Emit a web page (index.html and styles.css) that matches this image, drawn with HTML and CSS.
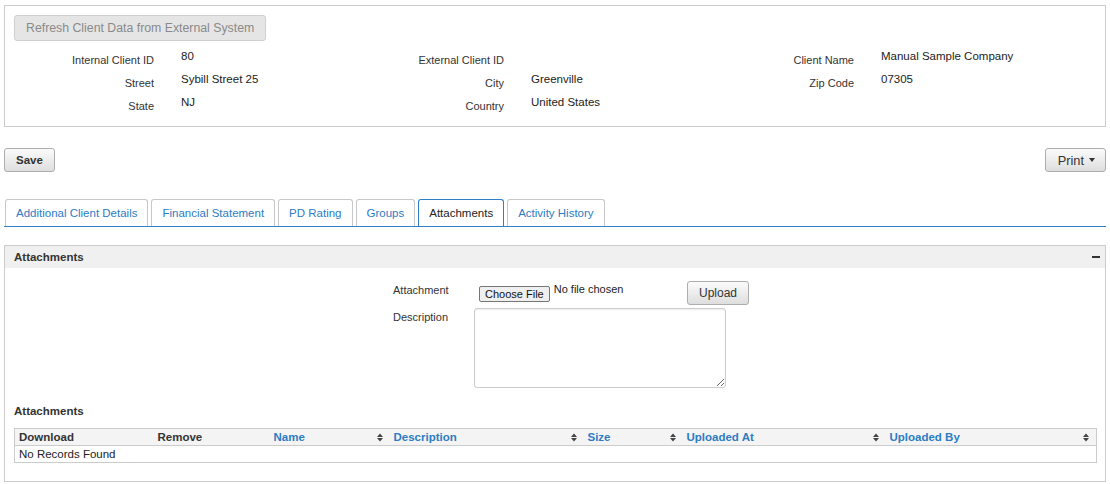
FILE: index.html
```html
<!DOCTYPE html>
<html lang="en">
<head>
<meta charset="utf-8">
<title>Client - Attachments</title>
<link rel="stylesheet" href="styles.css">
</head>
<body>
<div class="page">
  <section class="panel client">
    <button class="btn btn-refresh" disabled>Refresh Client Data from External System</button>
    <div class="fields">
      <div class="lbl">Internal Client ID</div><div class="val">80</div>
      <div class="lbl">External Client ID</div><div class="val"></div>
      <div class="lbl">Client Name</div><div class="val">Manual Sample Company</div>
      <div class="lbl">Street</div><div class="val">Sybill Street 25</div>
      <div class="lbl">City</div><div class="val">Greenville</div>
      <div class="lbl">Zip Code</div><div class="val">07305</div>
      <div class="lbl">State</div><div class="val">NJ</div>
      <div class="lbl">Country</div><div class="val">United States</div>
      <div class="lbl"></div><div class="val"></div>
    </div>
  </section>

  <div class="actions">
    <button class="btn btn-save">Save</button>
    <button class="btn btn-print">Print <span class="caret"></span></button>
  </div>

  <ul class="tabs">
    <li class="tab">Additional Client Details</li>
    <li class="tab">Financial Statement</li>
    <li class="tab">PD Rating</li>
    <li class="tab">Groups</li>
    <li class="tab active">Attachments</li>
    <li class="tab">Activity History</li>
  </ul>

  <section class="panel attach">
    <div class="panel-head"><span>Attachments</span><span class="collapse"></span></div>
    <div class="panel-body">
      <div class="upload">
        <div class="f-lbl">Attachment</div>
        <div class="file"><button class="choose">Choose File</button><span class="nofile">No file chosen</span></div>
        <div><button class="btn btn-upload">Upload</button></div>
        <div class="f-lbl">Description</div>
        <textarea class="desc"></textarea>
      </div>

      <h3 class="sub">Attachments</h3>
      <table class="grid">
        <colgroup>
          <col class="c1"><col class="c2"><col class="c3"><col class="c4"><col class="c5"><col class="c6"><col class="c7">
        </colgroup>
        <thead>
          <tr>
            <th>Download</th>
            <th>Remove</th>
            <th class="sortable"><div class="th-in"><span>Name</span><svg class="sort" viewBox="0 0 6 9" width="6" height="9"><polygon points="0,4 3,0.5 6,4"/><polygon points="0,5 3,8.5 6,5"/></svg></div></th>
            <th class="sortable"><div class="th-in"><span>Description</span><svg class="sort" viewBox="0 0 6 9" width="6" height="9"><polygon points="0,4 3,0.5 6,4"/><polygon points="0,5 3,8.5 6,5"/></svg></div></th>
            <th class="sortable"><div class="th-in"><span>Size</span><svg class="sort" viewBox="0 0 6 9" width="6" height="9"><polygon points="0,4 3,0.5 6,4"/><polygon points="0,5 3,8.5 6,5"/></svg></div></th>
            <th class="sortable"><div class="th-in"><span>Uploaded At</span><svg class="sort" viewBox="0 0 6 9" width="6" height="9"><polygon points="0,4 3,0.5 6,4"/><polygon points="0,5 3,8.5 6,5"/></svg></div></th>
            <th class="sortable"><div class="th-in"><span>Uploaded By</span><svg class="sort" viewBox="0 0 6 9" width="6" height="9"><polygon points="0,4 3,0.5 6,4"/><polygon points="0,5 3,8.5 6,5"/></svg></div></th>
          </tr>
        </thead>
        <tbody>
          <tr><td colspan="7">No Records Found</td></tr>
        </tbody>
      </table>
    </div>
  </section>
</div>
</body>
</html>
```

FILE: styles.css
```css
* { box-sizing: border-box; }

body {
  margin: 0;
  font-family: "Liberation Sans", Arial, sans-serif;
  color: #333;
  background: #fff;
}

.page {
  padding: 5px 4px 0 4px;
}

.panel {
  border: 1px solid #cccccc;
  background: #fff;
}

.client {
  padding: 9px 9px 10px;
}

.btn {
  font-family: inherit;
  color: #333;
  border: 1px solid #adadad;
  border-radius: 3px;
  background: linear-gradient(#fbfbfb, #dedede);
  cursor: pointer;
  margin: 0;
}

.btn-refresh {
  display: block;
  height: 26px;
  padding: 0 11px;
  font-size: 12.3px;
  color: #8a8a8a;
  background: #e5e5e5;
  border-color: #cfcfcf;
  cursor: default;
}

.fields {
  display: grid;
  grid-template-columns: 140px 210px 140px 210px 140px 210px;
  grid-auto-rows: 23px;
  margin-top: 6px;
}

.lbl {
  text-align: right;
  font-size: 11px;
  line-height: 14px;
  padding-top: 6px;
  color: #333;
}

.val {
  padding-left: 27px;
  padding-top: 2px;
  font-size: 11.5px;
  line-height: 14px;
  color: #222;
}

.actions {
  display: flex;
  justify-content: space-between;
  margin-top: 21px;
}

.btn-save {
  height: 24px;
  padding: 0 11px;
  font-size: 11.5px;
  font-weight: bold;
}

.btn-print {
  height: 24px;
  padding: 0 10px 0 12px;
  font-size: 12.8px;
  display: flex;
  align-items: center;
  gap: 5px;
}

.caret {
  width: 0;
  height: 0;
  border-left: 3.5px solid transparent;
  border-right: 3.5px solid transparent;
  border-top: 4px solid #333;
}

.tabs {
  list-style: none;
  margin: 27px 0 0;
  padding: 0 0 0 1px;
  display: flex;
  gap: 3px;
  border-bottom: 1px solid #2f80c9;
}

.tab {
  height: 27px;
  border: 1px solid #c8c8c8;
  border-bottom: 0;
  border-radius: 3px 3px 0 0;
  padding: 0 10px;
  font-size: 11.5px;
  line-height: 26px;
  color: #2d7cc4;
  background: #fff;
}

.tab.active {
  border-color: #2f80c9;
  color: #222;
}

.attach {
  margin-top: 18px;
}

.panel-head {
  height: 22px;
  background: #f0f0f0;
  display: flex;
  align-items: center;
  justify-content: space-between;
  padding: 0 5px 0 9px;
  font-size: 11.5px;
  font-weight: bold;
  color: #333;
}

.collapse {
  width: 8px;
  height: 2px;
  background: #333;
}

.panel-body {
  padding: 13px 9px 18px;
}

.upload {
  display: grid;
  grid-template-columns: 81px 213px auto;
  row-gap: 3px;
  align-items: start;
  width: max-content;
  margin-left: 379px;
}

.f-lbl {
  font-size: 11px;
  line-height: 14px;
  padding-top: 2px;
  color: #333;
}

.file {
  display: flex;
  align-items: flex-start;
}

.choose {
  margin: 5px 0 0 5px;
  height: 16px;
  padding: 0 5px;
  font-family: inherit;
  font-size: 11px;
  line-height: 14px;
  color: #111;
  border: 1px solid #767676;
  border-radius: 2px;
  background: #efefef;
}

.nofile {
  margin: 1px 0 0 4px;
  font-size: 11px;
  line-height: 14px;
  color: #222;
}

.btn-upload {
  display: block;
  height: 24px;
  padding: 0 11px;
  font-size: 12px;
}

.desc {
  grid-column: 2 / span 2;
  display: block;
  width: 252px;
  height: 80px;
  margin: 0;
  border: 1px solid #cccccc;
  border-radius: 3px;
  box-shadow: inset 0 1px 2px rgba(0, 0, 0, 0.08);
  font-family: inherit;
}

.sub {
  margin: 16px 0 10px;
  font-size: 11.5px;
  line-height: 14px;
  font-weight: bold;
  color: #333;
}

.grid {
  width: 100%;
  table-layout: fixed;
  border-collapse: collapse;
  border: 1px solid #cccccc;
  font-size: 11.5px;
}

.c1 { width: 139px; }
.c2 { width: 116px; }
.c3 { width: 120px; }
.c4 { width: 194px; }
.c5 { width: 99px; }
.c6 { width: 203px; }
.c7 { width: 211px; }

.grid th {
  height: 17px;
  padding: 0 4px;
  text-align: left;
  font-weight: bold;
  line-height: 16px;
  color: #333;
  background: #f4f4f4;
  border-bottom: 1px solid #cccccc;
}

.grid th.sortable {
  padding-right: 7px;
  color: #2d7cc4;
}

.th-in {
  display: flex;
  justify-content: space-between;
  align-items: center;
}

.sort {
  fill: #444;
  display: block;
}

.grid td {
  height: 17px;
  padding: 0 4px;
  line-height: 16px;
  color: #222;
}
```
